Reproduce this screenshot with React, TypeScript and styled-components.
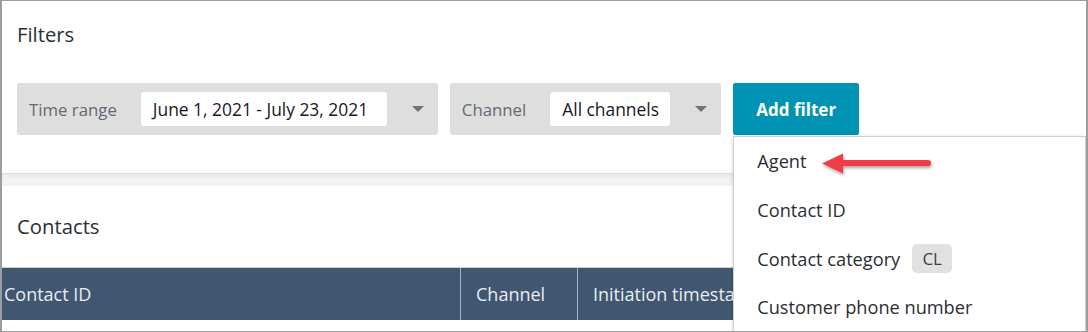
import React from "react";
import styled, { createGlobalStyle } from "styled-components";

const GlobalStyle = createGlobalStyle`
  html, body { margin: 0; padding: 0; background: #ffffff; }
  body { font-family: "Open Sans", "Noto Sans", Arial, sans-serif; }
  * { box-sizing: border-box; }
`;

const Frame = styled.div`
  position: relative;
  width: 1088px;
  height: 332px;
  border: 1px solid #9d9d9d;
  border-left-width: 2px;
  border-right-width: 2px;
  background: #f2f3f3;
  overflow: hidden;
  display: flex;
  flex-direction: column;
`;

const FiltersCard = styled.section`
  background: #ffffff;
  height: 172px;
  padding: 21px 15px 0 15px;
  flex: none;
`;

const Title = styled.h2`
  margin: 0;
  font-size: 20.3px;
  line-height: 24px;
  font-weight: 400;
  color: #2b2f33;
`;

const FilterRow = styled.div`
  display: flex;
  gap: 12px;
  margin-top: 37px;
`;

const FilterGroup = styled.div`
  display: flex;
  align-items: center;
  height: 52px;
  background: #dedede;
  border-radius: 2px;
  padding: 0 14px 0 12px;
`;

const FilterLabel = styled.span`
  font-size: 16.8px;
  color: #626a72;
  margin-right: 24px;
`;

const FilterValue = styled.span<{ $w: number }>`
  display: flex;
  align-items: center;
  width: ${(p) => p.$w}px;
  height: 34px;
  padding: 0 0 0 12px;
  background: #ffffff;
  border-radius: 3px;
  font-size: 17.4px;
  color: #16191f;
  white-space: nowrap;
`;

const Caret = styled.span`
  width: 0;
  height: 0;
  margin-left: 25px;
  border-left: 6px solid transparent;
  border-right: 6px solid transparent;
  border-top: 6px solid #6f747a;
`;

const AddFilterWrap = styled.div`
  position: relative;
`;

const AddButton = styled.button`
  height: 52px;
  width: 126px;
  border: none;
  border-radius: 2px;
  background: #0093b3;
  color: #ffffff;
  font-family: inherit;
  font-size: 17px;
  font-weight: 700;
  cursor: pointer;
`;

const Menu = styled.ul`
  position: absolute;
  top: calc(100% + 1px);
  left: 0;
  width: 353px;
  margin: 0;
  padding: 0;
  list-style: none;
  background: #ffffff;
  border: 1px solid #cfcfcf;
  box-shadow: 0 1px 4px rgba(0, 0, 0, 0.18);
  z-index: 5;
`;

const MenuItem = styled.li`
  display: flex;
  align-items: center;
  height: 48.7px;
  padding-left: 23px;
  font-size: 18.2px;
  color: #2a2e33;
`;

const Badge = styled.span`
  display: inline-flex;
  align-items: center;
  justify-content: center;
  width: 40px;
  height: 29px;
  margin-left: 12px;
  border-radius: 5px;
  background: #e1e1e1;
  font-size: 17px;
  color: #3a3f44;
`;

const Gap = styled.div`
  height: 13px;
  flex: none;
  background: linear-gradient(#d9d9d9 0px, #ececec 2px, #f3f3f3 6px, #f3f3f3 100%);
`;

const ContactsCard = styled.section`
  flex: 1;
  background: #ffffff;
  padding-top: 28px;
  display: flex;
  flex-direction: column;
`;

const ContactsTitle = styled(Title)`
  padding-left: 15px;
`;

const HeaderRow = styled.div`
  display: flex;
  margin-top: 29px;
  height: 53px;
  border-top: 1px solid #c9ced4;
  background: #415670;
`;

const HeaderCell = styled.div<{ $w?: number; $pl: number; $first?: boolean }>`
  display: flex;
  align-items: center;
  ${(p) => (p.$w ? `width: ${p.$w}px; flex: none;` : "flex: 1;")}
  padding-left: ${(p) => p.$pl}px;
  border-left: ${(p) => (p.$first ? "none" : "1px solid #a7b2bf")};
  font-size: 18px;
  color: #e9ecf0;
  white-space: nowrap;
  overflow: hidden;
`;

const ArrowSvg = styled.svg`
  position: absolute;
  left: 816px;
  top: 148px;
  overflow: visible;
  z-index: 6;
`;

function Arrow() {
  return (
    <ArrowSvg width="120" height="30" viewBox="0 0 120 30">
      <defs>
        <filter id="sh" x="-20%" y="-50%" width="140%" height="200%">
          <feDropShadow dx="1" dy="2" stdDeviation="1.5" floodColor="#000" floodOpacity="0.35" />
        </filter>
      </defs>
      <g filter="url(#sh)">
        <line x1="22" y1="14" x2="110" y2="14" stroke="#ef3c46" strokeWidth="6" strokeLinecap="round" />
        <polygon points="4,14.5 25,4.5 25,24.5" fill="#ef3c46" />
      </g>
    </ArrowSvg>
  );
}

export default function App() {
  return (
    <>
      <GlobalStyle />
      <Frame>
        <FiltersCard>
          <Title>Filters</Title>
          <FilterRow>
            <FilterGroup>
              <FilterLabel>Time range</FilterLabel>
              <FilterValue $w={246}>June 1, 2021 - July 23, 2021</FilterValue>
              <Caret />
            </FilterGroup>
            <FilterGroup>
              <FilterLabel>Channel</FilterLabel>
              <FilterValue $w={120}>All channels</FilterValue>
              <Caret />
            </FilterGroup>
            <AddFilterWrap>
              <AddButton>Add filter</AddButton>
              <Menu>
                <MenuItem>Agent</MenuItem>
                <MenuItem>Contact ID</MenuItem>
                <MenuItem>
                  Contact category<Badge>CL</Badge>
                </MenuItem>
                <MenuItem>Customer phone number</MenuItem>
              </Menu>
            </AddFilterWrap>
          </FilterRow>
        </FiltersCard>
        <Gap />
        <ContactsCard>
          <ContactsTitle>Contacts</ContactsTitle>
          <HeaderRow>
            <HeaderCell $w={458} $pl={2} $first>
              Contact ID
            </HeaderCell>
            <HeaderCell $w={117} $pl={15}>
              Channel
            </HeaderCell>
            <HeaderCell $pl={15}>Initiation timestamp</HeaderCell>
          </HeaderRow>
        </ContactsCard>
        <Arrow />
      </Frame>
    </>
  );
}
